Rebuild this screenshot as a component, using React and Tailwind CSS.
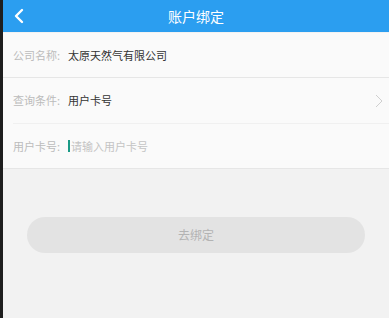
import React from 'react';

const Row = ({ label, children, border = 'border-b border-[#e6e6e6]' }) => (
  <div className={`flex items-center h-[45px] pl-[10px] pr-[6px] ${border}`}>
    <span className="w-[55px] text-[11px] text-[#bcbcbc]">{label}</span>
    <div className="flex-1 flex items-center text-[11px] text-[#333]">{children}</div>
  </div>
);

const App = () => {
  return (
    <div
      className="w-[389px] h-[318px] flex bg-[#1e1e1e] overflow-hidden"
      style={{ fontFamily: '"Noto Sans CJK SC", "Noto Sans", sans-serif' }}
    >
      <div className="ml-[3px] flex-1 flex flex-col bg-[#f2f2f2]">
        {/* Header */}
        <div className="h-[32px] bg-[#2b9ef0] relative flex items-center justify-center">
          <svg className="absolute left-[10px] top-[8px]" width="12" height="16" viewBox="0 0 12 16">
            <path d="M9 2 L3 8 L9 14" fill="none" stroke="#fff" strokeWidth="2.4" strokeLinecap="round" strokeLinejoin="round" />
          </svg>
          <span className="text-[14px] text-white">账户绑定</span>
        </div>

        {/* Form */}
        <div className="bg-[#fafafa] mt-[1px]">
          <Row label="公司名称:">太原天然气有限公司</Row>
          <div className="bg-[#fafafa]">
            <div className="flex items-center h-[45px] pl-[10px] pr-[6px]">
              <span className="w-[55px] text-[11px] text-[#bcbcbc]">查询条件:</span>
              <div className="flex-1 text-[11px] text-[#333]">用户卡号</div>
              <svg width="8" height="14" viewBox="0 0 8 14">
                <path d="M1 1 L7 7 L1 13" fill="none" stroke="#cfcfcf" strokeWidth="1" />
              </svg>
            </div>
            <div className="ml-[10px] border-b border-[#f0f0f0]" />
          </div>
          <Row label="用户卡号:">
            <span className="w-[2px] h-[12px] bg-[#1a9a86] mr-[1px]" />
            <span className="text-[#c4c4c4]">请输入用户卡号</span>
          </Row>
        </div>

        {/* Button */}
        <div className="px-[24px] pt-[48px]">
          <button className="w-full h-[36px] rounded-full bg-[#e3e3e3] text-[12px] text-[#b3b3b3]">
            去绑定
          </button>
        </div>
      </div>
    </div>
  );
};

export default App;
